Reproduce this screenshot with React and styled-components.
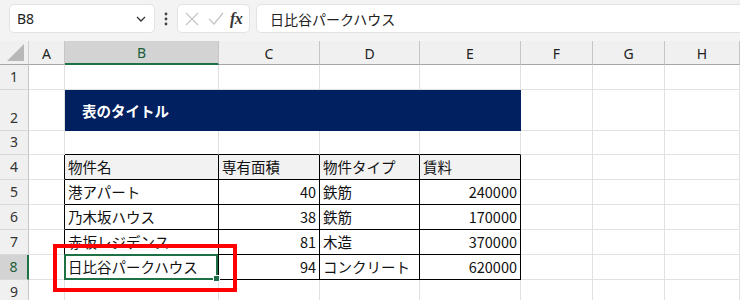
import React from 'react';
import styled, { createGlobalStyle } from 'styled-components';

const GlobalStyle = createGlobalStyle`
	html, body {
		margin: 0;
		padding: 0;
		background: #ffffff;
	}
	body {
		font-family: 'Noto Sans', 'Noto Sans CJK JP', sans-serif;
		color: #000;
	}
`;

const COLS = ['A', 'B', 'C', 'D', 'E', 'F', 'G', 'H'];
const COL_WIDTHS = [36, 154, 101, 100, 101, 72, 72, 75];
const ROW_HEIGHTS = [25, 41, 24, 25, 25, 25, 25, 25, 25];
const GREEN = '#1e7145';

const TABLE = [
	['物件名', '専有面積', '物件タイプ', '賃料'],
	['港アパート', '40', '鉄筋', '240000'],
	['乃木坂ハウス', '38', '鉄筋', '170000'],
	['赤坂レジデンス', '81', '木造', '370000'],
	['日比谷パークハウス', '94', 'コンクリート', '620000'],
];

const Page = styled.div`
	width: 740px;
	height: 300px;
	overflow: hidden;
	background: #f3f3f3;
`;

const Toolbar = styled.div`
	height: 41px;
	box-sizing: border-box;
	display: flex;
	align-items: flex-start;
	gap: 0;
	padding: 4px 0 0 9px;
`;

const Box = styled.div`
	height: 29px;
	box-sizing: border-box;
	background: #fff;
	border: 1px solid #e3e3e3;
	border-radius: 5px;
	display: flex;
	align-items: center;
	width: ${p => (p.$w ? `${p.$w}px` : 'auto')};
	flex: ${p => (p.$grow ? 1 : 'none')};
	margin-right: ${p => (p.$grow ? '-10px' : '0')};
`;

const NameText = styled.span`
	font-size: 14px;
	padding-left: 7px;
	flex: 1;
	color: #222;
`;

const FormulaText = styled.span`
	font-family: 'Noto Sans CJK JP', sans-serif;
	font-size: 14px;
	padding-left: 13px;
	color: #222;
`;

const Dots = styled.div`
	width: 22px;
	height: 29px;
	display: flex;
	align-items: center;
	justify-content: center;
`;

const Fx = styled.span`
	font-family: 'Liberation Serif', serif;
	font-style: italic;
	font-weight: bold;
	font-size: 16px;
	color: #333;
	margin-left: 6px;
	letter-spacing: -0.5px;
`;

const Gap = styled.div`
	width: 6px;
`;

const Sheet = styled.div`
	display: grid;
	grid-template-columns: 29px ${COL_WIDTHS.map(w => `${w}px`).join(' ')};
	grid-template-rows: 24px ${ROW_HEIGHTS.map(h => `${h}px`).join(' ')};
	background: #fff;
	position: relative;
`;

const Corner = styled.div`
	background: #f0f0f0;
	border-right: 1px solid #d0d0d0;
	border-bottom: 1px solid #a6a6a6;
	display: flex;
	align-items: flex-end;
	justify-content: flex-end;
	padding: 0 4px 3px 0;
`;

const ColHead = styled.div`
	box-sizing: border-box;
	background: ${p => (p.$sel ? '#d3d3d3' : '#f0f0f0')};
	border-right: 1px solid #c6c6c6;
	border-bottom: ${p => (p.$sel ? `2px solid ${GREEN}` : '1px solid #a6a6a6')};
	color: ${p => (p.$sel ? '#1b5e3b' : '#222')};
	font-size: 14px;
	display: flex;
	align-items: center;
	justify-content: center;
	padding-top: 1px;
`;

const RowHead = styled.div`
	box-sizing: border-box;
	background: ${p => (p.$sel ? '#d3d3d3' : '#f0f0f0')};
	border-right: ${p => (p.$sel ? `2px solid ${GREEN}` : '1px solid #c6c6c6')};
	border-bottom: 1px solid #d9d9d9;
	color: ${p => (p.$sel ? '#1b5e3b' : '#333')};
	font-size: 14px;
	display: flex;
	align-items: flex-end;
	justify-content: center;
	padding-bottom: 3px;
	line-height: 18px;
`;

const Cell = styled.div`
	box-sizing: border-box;
	position: ${p => (p.$anchor ? 'relative' : 'static')};
	background: ${p => p.$bg || '#fff'};
	border-right: 1px solid ${p => p.$br || '#e1e1e1'};
	border-bottom: 1px solid ${p => p.$bb || '#e1e1e1'};
	font-family: 'Noto Sans CJK JP', sans-serif;
	font-size: 14.5px;
	line-height: 20px;
	display: flex;
	align-items: flex-end;
	justify-content: ${p => (p.$right ? 'flex-end' : 'flex-start')};
	padding: 0 3px 2px 3px;
	white-space: nowrap;
	color: #111;
`;

const TitleCell = styled.div`
	grid-column: span 4;
	box-sizing: border-box;
	background: #002060;
	border-right: 1px solid #002060;
	color: #fff;
	font-family: 'Noto Sans CJK JP', sans-serif;
	font-weight: bold;
	font-size: 14.5px;
	display: flex;
	align-items: center;
	padding: 0 0 0 17px;
`;

const Selection = styled.div`
	position: absolute;
	left: -1px;
	top: -1px;
	right: 0;
	bottom: -1px;
	border: 2px solid ${GREEN};
	z-index: 2;
	&::after {
		content: '';
		position: absolute;
		right: -4px;
		bottom: -4px;
		width: 5px;
		height: 5px;
		background: ${GREEN};
		border: 1px solid #fff;
		box-sizing: content-box;
	}
`;

const Callout = styled.div`
	position: absolute;
	left: -12px;
	top: -11px;
	width: 184px;
	height: 48px;
	box-sizing: border-box;
	border: 4px solid #ff0000;
	z-index: 3;
`;

const Chevron = () => (
	<svg width="12" height="8" viewBox="0 0 12 8" style={{ marginRight: 7 }}>
		<path d="M2 2 L6 6 L10 2" fill="none" stroke="#333" strokeWidth="1.3" />
	</svg>
);

const VDots = () => (
	<svg width="4" height="14" viewBox="0 0 4 14">
		<circle cx="2" cy="2" r="1.4" fill="#444" />
		<circle cx="2" cy="7" r="1.4" fill="#444" />
		<circle cx="2" cy="12" r="1.4" fill="#444" />
	</svg>
);

const Cross = () => (
	<svg width="14" height="14" viewBox="0 0 14 14" style={{ marginLeft: 7 }}>
		<path d="M1 1 L13 13 M13 1 L1 13" stroke="#c4c4c4" strokeWidth="1.2" fill="none" />
	</svg>
);

const Check = () => (
	<svg width="16" height="14" viewBox="0 0 16 14" style={{ marginLeft: 9 }}>
		<path d="M1 7 L6 12 L15 1" stroke="#c4c4c4" strokeWidth="1.2" fill="none" />
	</svg>
);

const CornerTriangle = () => (
	<svg width="17" height="17" viewBox="0 0 17 17">
		<path d="M17 0 L17 17 L0 17 Z" fill="#b8b8b8" />
	</svg>
);

const inTable = (r, c) => r >= 4 && r <= 8 && c >= 1 && c <= 4;

const cellContent = (r, c) => {
	if (!inTable(r, c)) return null;
	return TABLE[r - 4][c - 1];
};

const App = () => {
	const rows = ROW_HEIGHTS.map((_, i) => i + 1);
	return (
		<Page>
			<GlobalStyle />
			<Toolbar>
				<Box $w={146}>
					<NameText>B8</NameText>
					<Chevron />
				</Box>
				<Dots>
					<VDots />
				</Dots>
				<Box $w={73}>
					<Cross />
					<Check />
					<Fx>fx</Fx>
				</Box>
				<Gap />
				<Box $grow>
					<FormulaText>日比谷パークハウス</FormulaText>
				</Box>
			</Toolbar>
			<Sheet>
				<Corner>
					<CornerTriangle />
				</Corner>
				{COLS.map(col => (
					<ColHead key={col} $sel={col === 'B'}>
						{col}
					</ColHead>
				))}
				{rows.map(r => (
					<React.Fragment key={r}>
						<RowHead $sel={r === 8}>{r}</RowHead>
						{COLS.map((col, c) => {
							if (r === 2 && c >= 1 && c <= 4) {
								return c === 1 ? <TitleCell key={col}>表のタイトル</TitleCell> : null;
							}
							const br =
								(r >= 4 && r <= 8 && c >= 0 && c <= 4) ? '#000' : undefined;
							const bb =
								(r >= 3 && r <= 8 && c >= 1 && c <= 4) ? '#000' : undefined;
							const text = cellContent(r, c);
							const numeric = r >= 5 && (c === 2 || c === 4);
							const anchor = r === 8 && c === 1;
							return (
								<Cell
									key={col}
									$br={br}
									$bb={bb}
									$bg={r === 4 && c >= 1 && c <= 4 ? '#f2f2f2' : undefined}
									$right={numeric}
									$anchor={anchor}
								>
									{text}
									{anchor && (
										<>
											<Selection />
											<Callout />
										</>
									)}
								</Cell>
							);
						})}
					</React.Fragment>
				))}
			</Sheet>
		</Page>
	);
};

export default App;
